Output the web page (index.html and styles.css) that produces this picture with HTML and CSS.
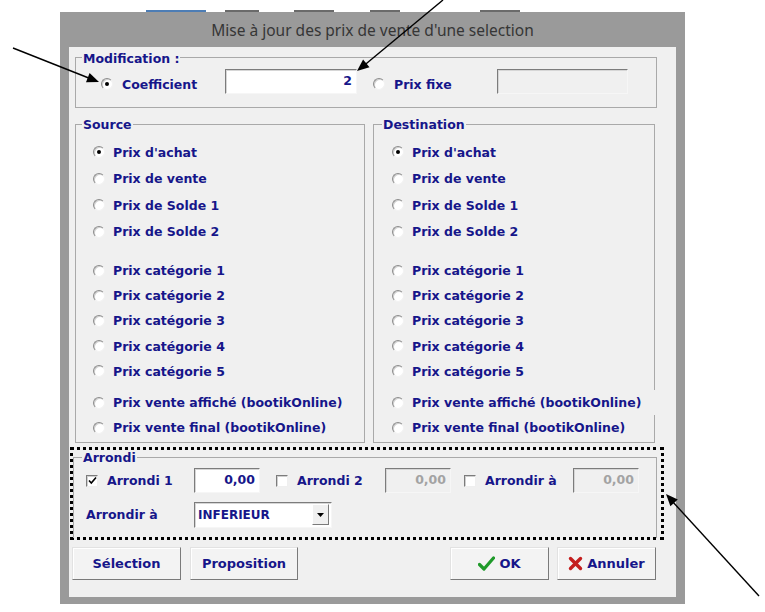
FILE: index.html
```html
<!DOCTYPE html>
<html lang="fr">
<head>
    <meta charset="UTF-8">
    <title>Mise à jour des prix de vente</title>
    <link rel="stylesheet" href="styles.css">
</head>
<body>

<div class="backdrop">
    <span class="bit blue" style="width:60px;margin-left:146px"></span>
    <span class="bit dark" style="width:34px;margin-left:19px"></span>
    <span class="bit dark" style="width:40px;margin-left:35px"></span>
    <span class="bit dark" style="width:30px;margin-left:36px"></span>
    <span class="bit dark" style="width:40px;margin-left:80px"></span>
</div>

<div class="dialog">
    <div class="titlebar">Mise à jour des prix de vente d'une selection</div>

    <div class="client">
        <div class="group modif">
            <div class="group-title">Modification :</div>
            <div class="modif-row">
                <label class="opt-inline coef"><span class="radio checked"></span>Coefficient</label>
                <div class="field coef-field">2</div>
                <label class="opt-inline fixe"><span class="radio"></span>Prix fixe</label>
                <div class="field disabled fixe-field"></div>
            </div>
        </div>

        <div class="columns">
            <div class="group source">
                <div class="group-title">Source</div>
                <div class="block block-a">
                    <div class="opt"><span class="radio checked"></span>Prix d'achat</div>
                    <div class="opt"><span class="radio"></span>Prix de vente</div>
                    <div class="opt"><span class="radio"></span>Prix de Solde 1</div>
                    <div class="opt"><span class="radio"></span>Prix de Solde 2</div>
                </div>
                <div class="block block-b">
                    <div class="opt"><span class="radio"></span>Prix catégorie 1</div>
                    <div class="opt"><span class="radio"></span>Prix catégorie 2</div>
                    <div class="opt"><span class="radio"></span>Prix catégorie 3</div>
                    <div class="opt"><span class="radio"></span>Prix catégorie 4</div>
                    <div class="opt"><span class="radio"></span>Prix catégorie 5</div>
                </div>
                <div class="block block-c">
                    <div class="opt"><span class="radio"></span>Prix vente affiché (bootikOnline)</div>
                    <div class="opt"><span class="radio"></span>Prix vente final (bootikOnline)</div>
                </div>
            </div>

            <div class="group dest">
                <div class="group-title">Destination</div>
                <div class="block block-a">
                    <div class="opt"><span class="radio checked"></span>Prix d'achat</div>
                    <div class="opt"><span class="radio"></span>Prix de vente</div>
                    <div class="opt"><span class="radio"></span>Prix de Solde 1</div>
                    <div class="opt"><span class="radio"></span>Prix de Solde 2</div>
                </div>
                <div class="block block-b">
                    <div class="opt"><span class="radio"></span>Prix catégorie 1</div>
                    <div class="opt"><span class="radio"></span>Prix catégorie 2</div>
                    <div class="opt"><span class="radio"></span>Prix catégorie 3</div>
                    <div class="opt"><span class="radio"></span>Prix catégorie 4</div>
                    <div class="opt"><span class="radio"></span>Prix catégorie 5</div>
                </div>
                <div class="block block-c">
                    <div class="opt cover"><span class="radio"></span>Prix vente affiché (bootikOnline)</div>
                    <div class="opt"><span class="radio"></span>Prix vente final (bootikOnline)</div>
                </div>
            </div>
        </div>

        <div class="rounding">
            <div class="group arrondi">
                <div class="group-title">Arrondi</div>
                <div class="arr-row">
                    <label class="check-opt c1">
                        <span class="checkbox"><svg width="9" height="9" viewBox="0 0 9 9"><path d="M1 4.5 L3.3 7 L8 1.5" fill="none" stroke="#000" stroke-width="1.6"/></svg></span>Arrondi 1
                    </label>
                    <div class="field small-field">0,00</div>
                    <label class="check-opt c2"><span class="checkbox"></span>Arrondi 2</label>
                    <div class="field disabled small-field">0,00</div>
                    <label class="check-opt c3"><span class="checkbox"></span>Arrondir à</label>
                    <div class="field disabled small-field">0,00</div>
                </div>
                <div class="arr-row second">
                    <span class="arr-label">Arrondir à</span>
                    <div class="combo">
                        <span class="combo-text">INFERIEUR</span>
                        <span class="combo-btn"><svg width="7" height="4" viewBox="0 0 7 4"><path d="M0 0 H7 L3.5 4 Z" fill="#000"/></svg></span>
                    </div>
                </div>
            </div>
        </div>

        <div class="buttons">
            <button class="btn sel">Sélection</button>
            <button class="btn prop">Proposition</button>
            <span class="spacer"></span>
            <button class="btn ok">
                <svg width="17" height="15" viewBox="0 0 17 15"><path d="M1.5 8.5 L6 13 L15.5 2" fill="none" stroke="#1f9a2a" stroke-width="3.2" stroke-linecap="round" stroke-linejoin="round"/></svg>OK
            </button>
            <button class="btn cancel">
                <svg width="15" height="15" viewBox="0 0 15 15"><path d="M2.5 2.5 L12.5 12.5 M12.5 2.5 L2.5 12.5" stroke="#c41e1e" stroke-width="3.4" stroke-linecap="round"/></svg>Annuler
            </button>
        </div>
    </div>
</div>

<svg class="arrows" width="765" height="612" viewBox="0 0 765 612">
    <line x1="13" y1="48" x2="90" y2="78.5" stroke="#000" stroke-width="1.4"/>
    <polygon points="99,82 86,82.2 89.6,72.9" fill="#000"/>
    <line x1="443" y1="0" x2="364" y2="65.5" stroke="#000" stroke-width="1.4"/>
    <polygon points="357,71 363.1,59.5 369.5,67.3" fill="#000"/>
    <line x1="759" y1="596" x2="672" y2="501" stroke="#000" stroke-width="1.4"/>
    <polygon points="666,494 677.8,499.5 670.4,506.3" fill="#000"/>
</svg>

</body>
</html>
```

FILE: styles.css
```css
body {
    margin: 0;
    width: 765px;
    height: 612px;
    background: #fff;
    position: relative;
    overflow: hidden;
    font-family: "DejaVu Sans", sans-serif;
    font-weight: bold;
    font-size: 12.5px;
    color: #16168a;
}
.backdrop {
    height: 12px;
    display: flex;
    align-items: flex-end;
}
.bit {
    height: 2px;
}
.bit.blue {
    background: #4d7db5;
}
.bit.dark {
    background: #6a6a6a;
}
.dialog {
    margin-left: 60px;
    width: 625px;
    height: 592px;
    background: #9a9a9a;
    box-sizing: border-box;
    padding: 0 9px 7px 9px;
}
.titlebar {
    height: 35px;
    line-height: 36px;
    text-align: center;
    font-family: "Noto Sans", "Open Sans", sans-serif;
    font-weight: normal;
    font-size: 15.5px;
    color: #363636;
}
.client {
    height: 550px;
    background: #f0f0f0;
    overflow: hidden;
}
.group {
    border: 1px solid #a9a9a9;
    box-sizing: border-box;
}
.group-title {
    width: fit-content;
    margin: -7px 0 0 6px;
    padding: 0 1px;
    line-height: 14px;
    height: 14px;
    background: #f0f0f0;
    white-space: nowrap;
}

/* modification */
.modif {
    margin: 10px 0 0 6px;
    width: 582px;
    height: 51px;
}
.modif .group-title {
    margin-top: -6px;
}
.modif-row {
    display: flex;
    align-items: center;
    height: 25px;
    margin-top: 3px;
    padding-left: 25px;
}
.opt-inline {
    display: flex;
    align-items: center;
    gap: 9px;
    padding-top: 5px;
}
.coef {
    width: 124px;
}
.fixe {
    width: 124px;
    margin-left: 16px;
}
.field {
    height: 25px;
    box-sizing: border-box;
    background: #fff;
    border: 1px solid;
    border-color: #7c7c7c #f6f6f6 #f6f6f6 #7c7c7c;
    box-shadow: inset 1px 1px 0 #d6d6d6;
    text-align: right;
    line-height: 22px;
    padding-right: 4px;
}
.field.disabled {
    background: #f0f0f0;
    color: #a3a3a3;
}
.coef-field {
    width: 132px;
}
.fixe-field {
    width: 131px;
}

/* radios */
.radio {
    width: 12px;
    height: 12px;
    flex: none;
    box-sizing: border-box;
    border-radius: 50%;
    background: #fff;
    border: 1px solid;
    border-color: #8c8c8c #f2f2f2 #f2f2f2 #8c8c8c;
    box-shadow: inset 1px 1px 0 #d0d0d0;
    display: flex;
    align-items: center;
    justify-content: center;
}
.radio.checked::after {
    content: "";
    width: 4px;
    height: 4px;
    border-radius: 50%;
    background: #000;
}

/* source / destination */
.columns {
    display: flex;
    margin-top: 16px;
}
.source {
    margin-left: 6px;
    width: 290px;
    height: 319px;
    padding-left: 17px;
}
.dest {
    margin-left: 8px;
    width: 282px;
    height: 319px;
    padding-left: 18px;
}
.source .group-title {
    margin-left: -11px;
}
.dest .group-title {
    margin-left: -10px;
}
.block-a {
    margin-top: 7px;
}
.block-a .opt {
    height: 26.5px;
}
.block-b {
    margin-top: 13px;
}
.block-b .opt {
    height: 25.2px;
}
.block-c {
    margin-top: 6.5px;
}
.block-c .opt {
    height: 25px;
}
.opt {
    display: flex;
    align-items: center;
    gap: 8px;
    white-space: nowrap;
}
.opt.cover {
    margin-left: -18px;
    padding-left: 18px;
    width: 284px;
    background: #f0f0f0;
}

/* arrondi */
.rounding {
    margin: 4px 0 0 1px;
    width: 594px;
    height: 93px;
    box-sizing: border-box;
    border: 3px dotted #000;
    padding: 7px 4px 0 0;
}
.arrondi {
    height: 81px;
    padding-left: 2px;
    border-bottom: none;
}
.arrondi .group-title {
    margin-left: 6px;
}
.arr-row {
    display: flex;
    align-items: center;
    height: 25px;
    margin-top: 3px;
    padding-left: 10px;
}
.arr-row.second {
    margin-top: 9px;
}
.check-opt {
    display: flex;
    align-items: center;
    gap: 9px;
}
.checkbox {
    width: 12px;
    height: 12px;
    flex: none;
    box-sizing: border-box;
    background: #fff;
    border: 1px solid;
    border-color: #7c7c7c #efefef #efefef #7c7c7c;
    box-shadow: inset 1px 1px 0 #cfcfcf;
    display: flex;
    align-items: center;
    justify-content: center;
}
.c1 {
    width: 108px;
}
.c2 {
    width: 109px;
    margin-left: 16px;
}
.c3 {
    width: 109px;
    margin-left: 13px;
}
.small-field {
    width: 66px;
}
.arr-label {
    width: 108px;
}
.combo {
    width: 138px;
    height: 26px;
    box-sizing: border-box;
    background: #fff;
    border: 1px solid;
    border-color: #7c7c7c #f6f6f6 #f6f6f6 #7c7c7c;
    box-shadow: inset 1px 1px 0 #d6d6d6;
    display: flex;
    align-items: center;
    padding: 0 2px 0 3px;
}
.combo-text {
    flex: 1;
    font-size: 12px;
}
.combo-btn {
    width: 17px;
    height: 21px;
    box-sizing: border-box;
    background: #f0f0f0;
    border: 1px solid;
    border-color: #fff #7a7a7a #7a7a7a #fff;
    display: flex;
    align-items: center;
    justify-content: center;
}

/* buttons */
.buttons {
    display: flex;
    margin-top: 7px;
    padding: 0 20px 0 3px;
    height: 33px;
}
.spacer {
    flex: 1;
}
.btn {
    font: inherit;
    font-size: 13px;
    color: inherit;
    height: 33px;
    box-sizing: border-box;
    background: #f3f3f3;
    border: 1px solid;
    border-color: #e2e2e2 #7a7a7a #7a7a7a #e2e2e2;
    box-shadow: inset 1px 1px 0 #fff;
    display: flex;
    align-items: center;
    justify-content: center;
    gap: 4px;
    padding: 0;
}
.sel {
    width: 109px;
}
.prop {
    width: 108px;
    margin-left: 9px;
}
.ok {
    width: 99px;
}
.cancel {
    width: 99px;
    margin-left: 8px;
}

.arrows {
    position: absolute;
    left: 0;
    top: 0;
    pointer-events: none;
}
```
